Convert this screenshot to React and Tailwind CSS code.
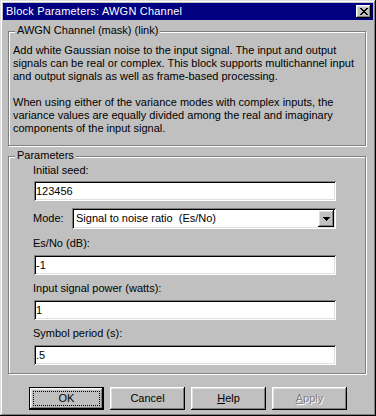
import React from "react";

const raised =
  "shadow-[inset_-1px_-1px_#000,inset_1px_1px_#fff,inset_-2px_-2px_#808080,inset_2px_2px_#dfdfdf]";
const sunken =
  "shadow-[inset_1px_1px_#808080,inset_-1px_-1px_#fff,inset_2px_2px_#000,inset_-2px_-2px_#dfdfdf]";

const GroupBox = ({ title, className, children }) => (
  <div
    className={`relative border border-[#808080] shadow-[1px_1px_0_#fff,inset_1px_1px_0_#fff] ${className}`}
  >
    <span className="absolute left-[6px] -top-[8px] bg-[#c0c0c0] px-[2px] leading-[13px] whitespace-nowrap">
      {title}
    </span>
    {children}
  </div>
);

const Field = ({ value, className = "" }) => (
  <div
    className={`ml-[1px] w-[302px] h-[20px] bg-white ${sunken} flex items-center px-[2px] leading-[13px] ${className}`}
  >
    {value}
  </div>
);

const Label = ({ children, className = "" }) => (
  <div className={`leading-[13px] whitespace-nowrap ${className}`}>{children}</div>
);

const Button = ({ children, isDefault, disabled }) => {
  if (isDefault) {
    return (
      <div className="w-[75px] h-[23px] border border-black">
        <div className={`w-full h-full p-[3px] ${raised}`}>
          <div className="w-full h-full border border-dotted border-black flex items-center justify-center leading-[13px]">
            {children}
          </div>
        </div>
      </div>
    );
  }
  return (
    <div
      className={`w-[75px] h-[23px] ${raised} flex items-center justify-center leading-[13px] ${
        disabled ? "text-[#808080] [text-shadow:1px_1px_0_#fff]" : ""
      }`}
    >
      {children}
    </div>
  );
};

const CloseIcon = () => (
  <svg width="8" height="7" viewBox="0 0 8 7" shapeRendering="crispEdges">
    <path
      d="M0 0h2v1H0zM6 0h2v1H6zM1 1h2v1H1zM5 1h2v1H5zM2 2h4v1H2zM3 3h2v1H3zM2 4h4v1H2zM1 5h2v1H1zM5 5h2v1H5zM0 6h2v1H0zM6 6h2v1H6z"
      fill="#000"
    />
  </svg>
);

const DropArrow = () => (
  <svg width="7" height="4" viewBox="0 0 7 4" shapeRendering="crispEdges">
    <path d="M0 0h7v1H0zM1 1h5v1H1zM2 2h3v1H2zM3 3h1v1H3z" fill="#000" />
  </svg>
);

export default function App() {
  return (
    <div
      className={`w-[376px] h-[416px] bg-[#c0c0c0] p-[3px] flex flex-col text-[11px] text-black font-['Liberation_Sans',Arial,sans-serif] shadow-[inset_-1px_-1px_#000,inset_1px_1px_#dfdfdf,inset_-2px_-2px_#808080,inset_2px_2px_#fff]`}
    >
      <div className="h-[17px] bg-[#000080] flex items-center justify-between pl-[3px] pr-[2px] text-white">
        <span className="leading-[13px] tracking-[0.2px]">Block Parameters: AWGN Channel</span>
        <div className={`w-[15px] h-[13px] bg-[#c0c0c0] ${raised} flex items-center justify-center`}>
          <CloseIcon />
        </div>
      </div>

      <GroupBox
        title="AWGN Channel (mask) (link)"
        className="mt-[11px] ml-[5px] w-[358px] h-[115px] pl-[4px] pt-[12px]"
      >
        <p className="leading-[13px] whitespace-nowrap">
          Add white Gaussian noise to the input signal. The input and output
          <br />
          signals can be real or complex. This block supports multichannel input
          <br />
          and output signals as well as frame-based processing.
        </p>
        <p className="mt-[13px] leading-[13px] whitespace-nowrap">
          When using either of the variance modes with complex inputs, the
          <br />
          variance values are equally divided among the real and imaginary
          <br />
          components of the input signal.
        </p>
      </GroupBox>

      <GroupBox
        title="Parameters"
        className="mt-[10px] ml-[5px] w-[358px] h-[218px] pl-[24px] pt-[7px]"
      >
        <Label>Initial seed:</Label>
        <Field value="123456" className="mt-[4px]" />
        <div className="mt-[7px] flex items-center">
          <span className="w-[39px] leading-[13px]">Mode:</span>
          <div className={`w-[264px] h-[21px] bg-white ${sunken} flex items-center justify-between pl-[4px] pr-[2px]`}>
            <span className="whitespace-pre leading-[13px]">Signal to noise ratio  (Es/No)</span>
            <div className={`w-[16px] h-[17px] bg-[#c0c0c0] ${raised} flex items-center justify-center`}>
              <DropArrow />
            </div>
          </div>
        </div>
        <Label className="mt-[8px]">Es/No (dB):</Label>
        <Field value="-1" className="mt-[5px]" />
        <Label className="mt-[7px]">Input signal power (watts):</Label>
        <Field value="1" className="mt-[5px]" />
        <Label className="mt-[7px]">Symbol period (s):</Label>
        <Field value=".5" className="mt-[5px]" />
      </GroupBox>

      <div className="mt-[13px] ml-[26px] flex gap-[6px]">
        <Button isDefault>OK</Button>
        <Button>Cancel</Button>
        <Button>
          <span>
            <u>H</u>elp
          </span>
        </Button>
        <Button disabled>
          <span>
            <u>A</u>pply
          </span>
        </Button>
      </div>
    </div>
  );
}
